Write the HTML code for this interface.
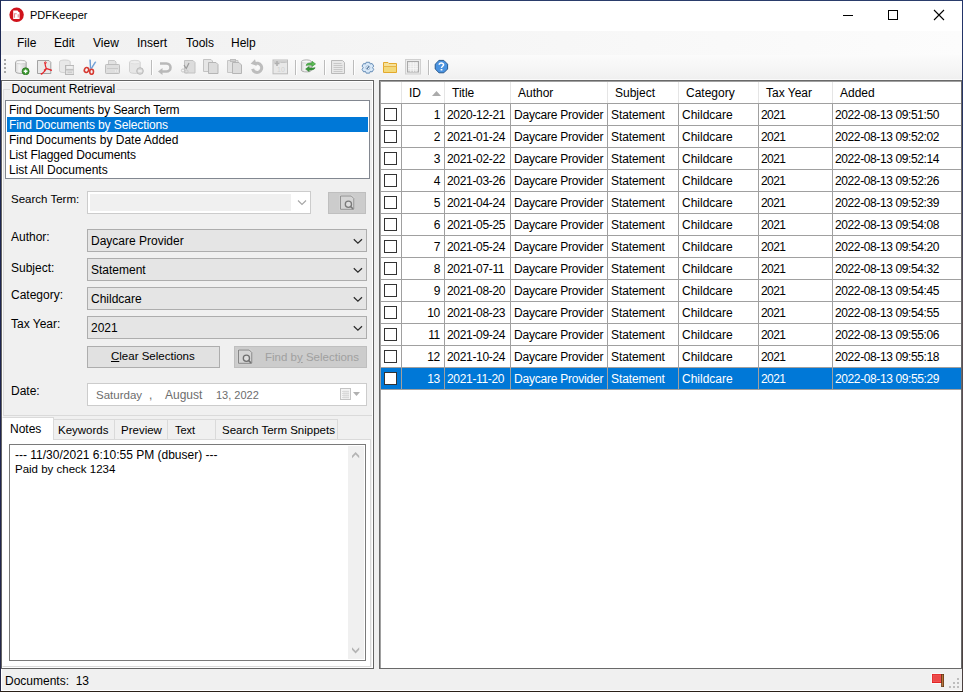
<!DOCTYPE html>
<html><head><meta charset="utf-8">
<style>
*{box-sizing:border-box;margin:0;padding:0}
body{width:963px;height:692px;position:relative;overflow:hidden;background:#f0f0f0;font-family:"Liberation Sans",sans-serif;font-size:12px;color:#000}
.a{position:absolute}
.t{position:absolute;white-space:nowrap;line-height:14px}
.s{font-size:11.5px}
.ic{position:absolute;width:16px;height:16px}
</style></head><body>
<div class="a" style="left:0px;top:0px;width:963px;height:31px;background:#fff"></div>
<svg class="a" style="left:9px;top:7px" width="16" height="16" viewBox="0 0 16 16">
<circle cx="7.6" cy="7.8" r="7.2" fill="#d0121b"/>
<path d="M4.2 3.6h4.6l1.8 1.8v6.6h-6.4z" fill="#fff"/>
<path d="M5.5 10.8V6.8h2.2M9.2 10.5V7.2" stroke="#e58a8e" stroke-width="1.1" fill="none"/>
<path d="M8.8 3.6L10.6 5.4" stroke="#d0121b" stroke-width="0.8"/>
</svg>
<div class="t" style="left:30px;top:8px;font-size:11px">PDFKeeper</div>
<div class="a" style="left:843px;top:15px;width:10px;height:1px;background:#000"></div>
<div class="a" style="left:888px;top:10px;width:10px;height:10px;border:1px solid #000"></div>
<svg class="a" style="left:933px;top:9px" width="12" height="12" viewBox="0 0 12 12"><path d="M1 1L11 11M11 1L1 11" stroke="#000" stroke-width="1.1"/></svg>
<div class="a" style="left:1px;top:31px;width:961px;height:24px;background:linear-gradient(to right,#f0f0f0,#fcfcfc)"></div>
<div class="t" style="left:17px;top:36px;">File</div>
<div class="t" style="left:54px;top:36px;">Edit</div>
<div class="t" style="left:93px;top:36px;">View</div>
<div class="t" style="left:137px;top:36px;">Insert</div>
<div class="t" style="left:186px;top:36px;">Tools</div>
<div class="t" style="left:231px;top:36px;">Help</div>
<div class="a" style="left:1px;top:55px;width:961px;height:25px;background:linear-gradient(#fbfbfb,#f5f5f5 60%,#efefef)"></div>
<div class="a" style="left:1px;top:79px;width:961px;height:1px;background:#fafafa"></div>
<!-- grip -->
<div class="a" style="left:4px;top:59px;width:2px;height:2px;background:#a7a7a7"></div>
<div class="a" style="left:4px;top:63px;width:2px;height:2px;background:#a7a7a7"></div>
<div class="a" style="left:4px;top:67px;width:2px;height:2px;background:#a7a7a7"></div>
<div class="a" style="left:4px;top:71px;width:2px;height:2px;background:#a7a7a7"></div>
<!-- separators -->
<div class="a" style="left:151px;top:60px;width:1px;height:15px;background:#bcbcbc;box-shadow:1px 0 0 #fff"></div>
<div class="a" style="left:295px;top:60px;width:1px;height:15px;background:#bcbcbc;box-shadow:1px 0 0 #fff"></div>
<div class="a" style="left:324px;top:60px;width:1px;height:15px;background:#bcbcbc;box-shadow:1px 0 0 #fff"></div>
<div class="a" style="left:353px;top:60px;width:1px;height:15px;background:#bcbcbc;box-shadow:1px 0 0 #fff"></div>
<div class="a" style="left:428px;top:60px;width:1px;height:15px;background:#bcbcbc;box-shadow:1px 0 0 #fff"></div>
<!-- 1 db add -->
<svg class="ic" style="left:14px;top:59px" viewBox="0 0 16 16">
<defs><linearGradient id="cyl" x1="0" x2="1"><stop offset="0" stop-color="#d8d8d8"/><stop offset="0.35" stop-color="#f4f4f4"/><stop offset="1" stop-color="#cfcfcf"/></linearGradient></defs>
<path d="M1.5 3.2C1.5 0.8 12.2 0.8 12.2 3.2V12.6C12.2 15 1.5 15 1.5 12.6Z" fill="url(#cyl)" stroke="#9f9f9f" stroke-width="0.9"/>
<ellipse cx="6.85" cy="3.2" rx="5" ry="1.7" fill="#f7f7f7" stroke="#bdbdbd" stroke-width="0.6"/>
<circle cx="11.6" cy="12.3" r="3.5" fill="#3c9a30" stroke="#2b7321" stroke-width="0.8"/>
<path d="M11.6 10.4v3.8M9.7 12.3h3.8" stroke="#fff" stroke-width="1.4"/>
</svg>
<!-- 2 pdf -->
<svg class="ic" style="left:36px;top:59px" viewBox="0 0 16 16">
<path d="M1.5 1.5H13L14.8 3.3V14.5H1.5Z" fill="#e9e9e9" stroke="#9a9a9a" stroke-width="0.9"/>
<path d="M9.3 3.6C8.6 5 9.6 7.6 10.3 9.4C10 10.8 7.5 13.5 5.6 15M10.3 9.4C11.5 10 13.8 10.6 15.3 11.2M10.3 9.4L8 11.5" fill="none" stroke="#e3262b" stroke-width="1.2"/>
<circle cx="9.4" cy="3.7" r="0.9" fill="none" stroke="#e3262b" stroke-width="0.9"/>
<circle cx="15.2" cy="11.2" r="0.8" fill="#e3262b"/><circle cx="5.5" cy="14.8" r="0.9" fill="#e3262b"/>
</svg>
<!-- 3 db save disabled -->
<svg class="ic" style="left:58px;top:59px" viewBox="0 0 16 16">
<path d="M1.5 2.8C1.5 0.4 12.2 0.4 12.2 2.8V12C12.2 14.2 1.5 14.2 1.5 12Z" fill="#e8e8e8" stroke="#cdcdcd" stroke-width="0.9"/>
<rect x="7.5" y="6.5" width="8.5" height="9" fill="#e2e2e2" stroke="#b9b9b9"/>
<rect x="9" y="7" width="5.5" height="2.5" fill="#efefef"/>
<path d="M8 10.8h7.5" stroke="#b9b9b9" stroke-width="1.2"/>
<path d="M9.5 13.2h4.5" stroke="#c4c4c4" stroke-width="1"/>
</svg>
<!-- 4 scissors -->
<svg class="ic" style="left:82px;top:59px" viewBox="0 0 16 16">
<path d="M8 0.5L8.6 10.3" stroke="#8fb7e3" stroke-width="1.5"/>
<path d="M13.8 2.6L9 10.2" stroke="#8fb7e3" stroke-width="1.5"/>
<path d="M8.2 1L8.6 9M13.2 3L9.6 9" stroke="#4a7fc0" stroke-width="0.5"/>
<ellipse cx="4.5" cy="11" rx="2.1" ry="2.5" fill="none" stroke="#d63a32" stroke-width="1.6" transform="rotate(25 4.5 11)"/>
<ellipse cx="9.6" cy="12.8" rx="1.9" ry="2.5" fill="none" stroke="#d63a32" stroke-width="1.6"/>
</svg>
<!-- 5 printer disabled -->
<svg class="ic" style="left:104px;top:59px" viewBox="0 0 16 16">
<path d="M4.5 1.5H10.5L12 3V6H4.5Z" fill="#e2e2e2" stroke="#c8c8c8"/>
<rect x="1.5" y="5.5" width="14" height="9" rx="0.8" fill="#dedede" stroke="#bdbdbd"/>
<path d="M3 9.5h11" stroke="#c9c9c9"/><path d="M11 12h1M13 12h1" stroke="#f6f6f6"/>
</svg>
<!-- 6 db minus disabled -->
<svg class="ic" style="left:128px;top:59px" viewBox="0 0 16 16">
<path d="M1.5 3.2C1.5 0.8 12.2 0.8 12.2 3.2V12.6C12.2 15 1.5 15 1.5 12.6Z" fill="#e6e6e6" stroke="#cdcdcd" stroke-width="0.9"/>
<ellipse cx="6.85" cy="3.2" rx="5" ry="1.7" fill="#eeeeee" stroke="#d6d6d6" stroke-width="0.6"/>
<circle cx="12" cy="12" r="3.3" fill="#d9d9d9" stroke="#b9b9b9"/>
<path d="M10.2 12h3.6" stroke="#f4f4f4" stroke-width="1.4"/>
</svg>
<!-- 7 undo -->
<svg class="ic" style="left:157px;top:59px" viewBox="0 0 16 16">
<path d="M3 4.5H9.5A4 4 0 0 1 9.5 12.5H5" fill="none" stroke="#b9b9b9" stroke-width="2.6"/>
<path d="M1 12.5L5.5 9V16Z" fill="#b9b9b9"/>
</svg>
<!-- 8 cut doc -->
<svg class="ic" style="left:180px;top:59px" viewBox="0 0 16 16">
<path d="M4.5 1.5H13L15 3.5V14H4.5Z" fill="#dcdcdc" stroke="#c2c2c2"/>
<path d="M9 4L6 10M4 6L6.5 10" stroke="#9a9a9a" stroke-width="1.2"/>
<circle cx="3" cy="11.5" r="1.6" fill="none" stroke="#c8c8c8"/><circle cx="6.5" cy="12.5" r="1.6" fill="none" stroke="#c8c8c8"/>
</svg>
<!-- 9 copy -->
<svg class="ic" style="left:203px;top:59px" viewBox="0 0 16 16">
<path d="M0.5 0.5H8L9.5 2V12.5H0.5Z" fill="#e6e6e6" stroke="#c3c3c3"/>
<path d="M5.5 3.5H13L15 5.5V14.5H5.5Z" fill="#dcdcdc" stroke="#b5b5b5"/>
</svg>
<!-- 10 paste -->
<svg class="ic" style="left:227px;top:59px" viewBox="0 0 16 16">
<path d="M0.5 1.5H11V13.5H0.5Z" fill="#e3e3e3" stroke="#c6c6c6"/>
<rect x="3.5" y="0.5" width="5" height="2" fill="#cfcfcf" stroke="#bdbdbd"/>
<path d="M5.5 3.5H12L14.5 6V14.5H5.5Z" fill="#dcdcdc" stroke="#b5b5b5"/>
</svg>
<!-- 11 rotate -->
<svg class="ic" style="left:250px;top:59px" viewBox="0 0 16 16">
<path d="M4.2 5.2A4.6 4.6 0 1 1 2.6 9.8" fill="none" stroke="#bdbdbd" stroke-width="3"/>
<path d="M5 0.3L0.6 4.8L6.8 6.8Z" fill="#bdbdbd"/>
<circle cx="7.6" cy="8.6" r="1.6" fill="#fafafa"/>
</svg>
<!-- 12 calendar -->
<svg class="ic" style="left:272px;top:59px" viewBox="0 0 16 16">
<rect x="1" y="1" width="14.5" height="13.8" fill="#e8e8e8" stroke="#bdbdbd"/>
<path d="M1.5 3h13.5" stroke="#cfcfcf" stroke-width="2"/>
<path d="M2.5 4.5h5M5 2v5" stroke="#b0b0b0" stroke-width="1.6"/>
<path d="M9 3.5h4.5" stroke="#c4c4c4" stroke-width="1"/>
<text x="9" y="12.6" font-size="7" text-anchor="middle" fill="#d2d2d2" font-family="Liberation Sans">10</text>
</svg>
<!-- 13 db refresh -->
<svg class="ic" style="left:300px;top:59px" viewBox="0 0 17 17">
<path d="M1.5 2.8C1.5 0.4 12 0.4 12 2.8V12C12 14.3 1.5 14.3 1.5 12Z" fill="url(#cyl)" stroke="#a5a5a5" stroke-width="0.9"/>
<ellipse cx="6.75" cy="2.8" rx="5" ry="1.6" fill="#f7f7f7" stroke="#bdbdbd" stroke-width="0.6"/>
<path d="M6.5 6.8C7 4.6 9 4.2 12.8 4.3V2.5L16.5 5.2L12.8 8V6.4C10 6.3 8.4 6.5 6.5 6.8Z" fill="#5cbc55" stroke="#2f8a2e" stroke-width="0.6"/>
<path d="M16 9.2C15.5 11.3 13.5 11.7 9.7 11.6V13.4L6 10.7L9.7 8V9.6C12.5 9.6 14 9.5 16 9.2Z" fill="#3a9a3a" stroke="#2a7a2a" stroke-width="0.6"/>
</svg>
<!-- 14 doc -->
<svg class="ic" style="left:330px;top:59px" viewBox="0 0 16 16">
<path d="M1.5 1.5H12.5L14.5 3.5V14.5H1.5Z" fill="#e8e8e8" stroke="#b9b9b9"/>
<path d="M3.5 4.5h8M3.5 6.5h9M3.5 8.5h9M3.5 10.5h9M3.5 12.5h9" stroke="#c4c4c4" stroke-width="0.9"/>
</svg>
<!-- 15 gear -->
<svg class="ic" style="left:360px;top:60px" viewBox="0 0 16 16">
<g transform="translate(1,1) scale(0.86)">
<path d="M6 1.5H10L10.8 3.5L12.9 2.9L14.8 5.9L13.4 7.8L14.8 9.7L12.9 12.7L10.8 12.1L10 14.1H6L5.2 12.1L3.1 12.7L1.2 9.7L2.6 7.8L1.2 5.9L3.1 2.9L5.2 3.5Z" fill="#d9e9f8" stroke="#5f87b3" stroke-width="1.1"/>
<circle cx="8" cy="7.8" r="2.3" fill="#f2f8fd" stroke="#86a5c6" stroke-width="0.8"/>
<path d="M9.2 6.3L6.8 9.3" stroke="#3f6590" stroke-width="1.2"/>
</g>
</svg>
<!-- 16 folder -->
<svg class="ic" style="left:382px;top:59px" viewBox="0 0 16 16">
<path d="M1.5 3.5H6L7 4.5H14.5V13.5H1.5Z" fill="#f6e19a" stroke="#e3a92c"/>
<path d="M1.5 7.5H14.5" stroke="#e7b447"/>
<rect x="2" y="8" width="12" height="5" fill="#f3d97a"/>
</svg>
<!-- 17 grid -->
<svg class="ic" style="left:405px;top:59px" viewBox="0 0 16 16">
<rect x="0.5" y="0.5" width="15" height="14.5" fill="#ececec" stroke="#d0d0d0"/>
<rect x="2.5" y="2.5" width="11" height="10.5" fill="#e4e4e4" stroke="#a9a9a9"/>
<path d="M3 5h10M3 7.3h10M3 9.6h10M5.8 3v10M8.4 3v10M11 3v10" stroke="#f7f7f7" stroke-width="0.8"/>
</svg>
<!-- 18 help -->
<svg class="ic" style="left:434px;top:59px" viewBox="0 0 16 16">
<path d="M5 1.4H9.8L13.6 5.2V10L9.8 13.8H5L1.2 10V5.2Z" fill="#4a93e0" stroke="#1d4f84" stroke-width="0.9"/>
<path d="M5.2 5.8C5.2 3.6 9.6 3.5 9.6 5.8C9.6 7.2 7.5 7.3 7.5 9" fill="none" stroke="#fff" stroke-width="1.5"/>
<rect x="6.6" y="10" width="1.8" height="1.5" fill="#fff"/>
</svg>

<div class="a" style="left:1px;top:80px;width:373px;height:589px;border:1px solid #646464;background:#f0f0f0"></div>
<div class="a" style="left:2px;top:81px;width:371px;height:1px;background:#fff"></div>
<div class="a" style="left:2px;top:81px;width:1px;height:586px;background:#fff"></div>
<div class="a" style="left:372px;top:81px;width:1px;height:586px;background:#fff"></div>
<div class="a" style="left:2px;top:667px;width:371px;height:1px;background:#fff"></div>
<div class="a" style="left:3px;top:89px;width:369px;height:1px;background:#dcdcdc"></div>
<div class="a" style="left:3px;top:89px;width:1px;height:327px;background:#dcdcdc"></div>
<div class="t" style="left:9.5px;top:82px;background:#f0f0f0;padding:0 2px;letter-spacing:-0.1px">Document Retrieval</div>
<div class="a" style="left:5px;top:100px;width:365px;height:79px;border:1px solid #828790;background:#fff"></div>
<div class="a" style="left:7px;top:117px;width:361px;height:15px;background:#0078d7"></div>
<div class="t" style="left:9px;top:103px;letter-spacing:-0.14px">Find Documents by Search Term</div>
<div class="t" style="left:9px;top:118px;color:#fff;letter-spacing:-0.11px">Find Documents by Selections</div>
<div class="t" style="left:9px;top:133px;">Find Documents by Date Added</div>
<div class="t" style="left:9px;top:148px;letter-spacing:-0.11px">List Flagged Documents</div>
<div class="t" style="left:9px;top:163px;">List All Documents</div>
<div class="t" style="left:11px;top:192px;font-size:11.5px">Search Term:</div>
<div class="a" style="left:87px;top:191px;width:224px;height:23px;border:1px solid #cccccc;background:#fff"></div>
<div class="a" style="left:90px;top:194px;width:201px;height:17px;background:#f0f0f0"></div>
<svg class="a" style="left:297px;top:199px" width="10" height="7" viewBox="0 0 10 7"><path d="M1 1.5L5 5.5L9 1.5" stroke="#a6a6a6" stroke-width="1.1" fill="none"/></svg>
<div class="a" style="left:328px;top:192px;width:38px;height:22px;border:1px solid #bfbfbf;background:#cccccc"></div>
<svg class="a" style="left:339px;top:194px" width="17" height="17" viewBox="0 0 17 17">
<path d="M0.5 1H13L15.5 3.5V16.2H0.5Z" fill="#e2e2e2" opacity="0.6"/>
<path d="M1.5 2H12.3L14.8 4.5V15.3H1.5Z" fill="#d5d5d5" stroke="#8a8a8a" stroke-width="0.9"/>
<circle cx="9.4" cy="10.3" r="3.1" fill="#dedede" stroke="#7a7a7a" stroke-width="1.3"/>
<path d="M11.6 12.5L14 14.9" stroke="#7a7a7a" stroke-width="1.5"/>
</svg>
<div class="t" style="left:11px;top:230px;">Author:</div>
<div class="a" style="left:87px;top:229px;width:280px;height:23px;border:1px solid #adadad;background:#e5e5e5"></div>
<div class="t" style="left:91px;top:234px;">Daycare Provider</div>
<svg class="a" style="left:353px;top:238px" width="10" height="7" viewBox="0 0 10 7"><path d="M0.8 1.3L4.9 5.1L9 1.3" stroke="#2a2a2a" stroke-width="1.25" fill="none"/></svg>
<div class="t" style="left:11px;top:261px;">Subject:</div>
<div class="a" style="left:87px;top:258px;width:280px;height:23px;border:1px solid #adadad;background:#e5e5e5"></div>
<div class="t" style="left:91px;top:263px;">Statement</div>
<svg class="a" style="left:353px;top:267px" width="10" height="7" viewBox="0 0 10 7"><path d="M0.8 1.3L4.9 5.1L9 1.3" stroke="#2a2a2a" stroke-width="1.25" fill="none"/></svg>
<div class="t" style="left:11px;top:288px;">Category:</div>
<div class="a" style="left:87px;top:287px;width:280px;height:23px;border:1px solid #adadad;background:#e5e5e5"></div>
<div class="t" style="left:91px;top:292px;">Childcare</div>
<svg class="a" style="left:353px;top:296px" width="10" height="7" viewBox="0 0 10 7"><path d="M0.8 1.3L4.9 5.1L9 1.3" stroke="#2a2a2a" stroke-width="1.25" fill="none"/></svg>
<div class="t" style="left:11px;top:317px;">Tax Year:</div>
<div class="a" style="left:87px;top:316px;width:280px;height:23px;border:1px solid #adadad;background:#e5e5e5"></div>
<div class="t" style="left:91px;top:321px;">2021</div>
<svg class="a" style="left:353px;top:325px" width="10" height="7" viewBox="0 0 10 7"><path d="M0.8 1.3L4.9 5.1L9 1.3" stroke="#2a2a2a" stroke-width="1.25" fill="none"/></svg>
<div class="a" style="left:87px;top:346px;width:133px;height:22px;border:1px solid #adadad;background:#e1e1e1"></div>
<div class="t" style="left:111px;top:349px;font-size:11.5px"><u>C</u>lear Selections</div>
<div class="a" style="left:234px;top:346px;width:133px;height:22px;border:1px solid #bfbfbf;background:#cccccc"></div>
<svg class="a" style="left:237px;top:348px" width="17" height="17" viewBox="0 0 17 17">
<path d="M0.5 1H13L15.5 3.5V16.2H0.5Z" fill="#e2e2e2" opacity="0.6"/>
<path d="M1.5 2H12.3L14.8 4.5V15.3H1.5Z" fill="#d5d5d5" stroke="#7d7d7d" stroke-width="0.9"/>
<circle cx="9.4" cy="10.3" r="3.1" fill="#dedede" stroke="#707070" stroke-width="1.3"/>
<path d="M11.6 12.5L14 14.9" stroke="#707070" stroke-width="1.5"/>
</svg>
<div class="t" style="left:265px;top:350px;font-size:11.5px;color:#a0a0a0">Find b<u>y</u> Selections</div>
<div class="t" style="left:11px;top:384px;">Date:</div>
<div class="a" style="left:87px;top:383px;width:280px;height:23px;border:1px solid #cccccc;background:#fff"></div>
<div class="t" style="left:96px;top:388px;font-size:11.5px;color:#6d6d6d">Saturday</div>
<div class="t" style="left:149px;top:388px;font-size:12px;color:#6d6d6d">,</div>
<div class="t" style="left:165px;top:388px;font-size:12px;color:#6d6d6d">August</div>
<div class="t" style="left:216px;top:388px;font-size:11px;color:#6d6d6d">13, 2022</div>
<svg class="a" style="left:339px;top:387px" width="24" height="14" viewBox="0 0 24 14">
<rect x="1.5" y="1.5" width="10" height="11" fill="#f4f4f4" stroke="#c4c4c4"/>
<path d="M3 4.5h7M3 6.5h7M3 8.5h7M3 10.5h7M5 3.5v8M7 3.5v8M9 3.5v8" stroke="#d6d6d6" stroke-width="0.8"/>
<path d="M14 5h7l-3.5 4z" fill="#b0b0b0"/>
</svg>
<div class="a" style="left:3px;top:415px;width:369px;height:1px;background:#dadada"></div>
<div class="a" style="left:2px;top:439px;width:369px;height:228px;border:1px solid #dadada;border-left-color:#fff;background:#fff"></div>
<div class="a" style="left:53px;top:419px;width:62px;height:21px;border:1px solid #dadada;border-left:none;background:#f0f0f0"></div>
<div class="a" style="left:114px;top:419px;width:54px;height:21px;border:1px solid #dadada;background:#f0f0f0"></div>
<div class="a" style="left:167px;top:419px;width:49px;height:21px;border:1px solid #dadada;background:#f0f0f0"></div>
<div class="a" style="left:215px;top:419px;width:123px;height:21px;border:1px solid #dadada;background:#f0f0f0"></div>
<div class="a" style="left:2px;top:417px;width:52px;height:23px;border:1px solid #dadada;border-bottom:none;border-left-color:#fff;background:#fff"></div>
<div class="t" style="left:10px;top:422px;">Notes</div>
<div class="t" style="left:58px;top:423px;font-size:11.5px">Keywords</div>
<div class="t" style="left:121px;top:423px;font-size:11.5px">Preview</div>
<div class="t" style="left:175px;top:423px;font-size:11px">Text</div>
<div class="t" style="left:222px;top:423px;font-size:11.5px">Search Term Snippets</div>
<div class="a" style="left:9px;top:444px;width:357px;height:217px;border:1px solid #7a7a7a;background:#fff"></div>
<div class="a" style="left:348px;top:446px;width:16px;height:213px;background:#f0f0f0"></div>
<svg class="a" style="left:350px;top:450px" width="12" height="9" viewBox="0 0 12 9"><path d="M2 8.2V5.8L5.6 2L9.2 5.8V8.2L5.6 4.6Z" fill="#b4b4b4"/></svg>
<svg class="a" style="left:350px;top:645px" width="12" height="10" viewBox="0 0 12 10"><path d="M2 2.3V4.7L5.6 8.5L9.2 4.7V2.3L5.6 5.9Z" fill="#b4b4b4"/></svg>
<div class="t" style="left:15px;top:448px;">--- 11/30/2021 6:10:55 PM (dbuser) ---</div>
<div class="t" style="left:15px;top:462px;font-size:11.5px">Paid by check 1234</div>
<div class="a" style="left:379px;top:80px;width:583px;height:589px;border:1px solid #696969;background:#fff"></div>
<div class="a" style="left:380px;top:81px;width:1px;height:587px;background:#a0a0a0"></div>
<div class="a" style="left:380px;top:81px;width:581px;height:1px;background:#a0a0a0"></div>
<div class="a" style="left:381px;top:82px;width:580px;height:21px;background:#fff"></div>
<div class="a" style="left:401px;top:82px;width:1px;height:21px;background:#e5e5e5"></div>
<div class="a" style="left:444px;top:82px;width:1px;height:21px;background:#e5e5e5"></div>
<div class="a" style="left:510px;top:82px;width:1px;height:21px;background:#e5e5e5"></div>
<div class="a" style="left:607px;top:82px;width:1px;height:21px;background:#e5e5e5"></div>
<div class="a" style="left:678px;top:82px;width:1px;height:21px;background:#e5e5e5"></div>
<div class="a" style="left:758px;top:82px;width:1px;height:21px;background:#e5e5e5"></div>
<div class="a" style="left:832px;top:82px;width:1px;height:21px;background:#e5e5e5"></div>
<div class="a" style="left:381px;top:103px;width:580px;height:1px;background:#a0a0a0"></div>
<div class="t" style="left:409px;top:86px;">ID</div>
<div class="t" style="left:452px;top:86px;">Title</div>
<div class="t" style="left:518px;top:86px;">Author</div>
<div class="t" style="left:615px;top:86px;">Subject</div>
<div class="t" style="left:686px;top:86px;">Category</div>
<div class="t" style="left:766px;top:86px;">Tax Year</div>
<div class="t" style="left:840px;top:86px;">Added</div>
<svg class="a" style="left:431px;top:90px" width="11" height="7" viewBox="0 0 11 7"><path d="M1 6L5.5 1L10 6Z" fill="#ababab"/></svg>
<div class="a" style="left:381px;top:125px;width:580px;height:1px;background:#a0a0a0"></div>
<div class="a" style="left:401px;top:104px;width:1px;height:21px;background:#a0a0a0"></div>
<div class="a" style="left:444px;top:104px;width:1px;height:21px;background:#a0a0a0"></div>
<div class="a" style="left:510px;top:104px;width:1px;height:21px;background:#a0a0a0"></div>
<div class="a" style="left:607px;top:104px;width:1px;height:21px;background:#a0a0a0"></div>
<div class="a" style="left:678px;top:104px;width:1px;height:21px;background:#a0a0a0"></div>
<div class="a" style="left:758px;top:104px;width:1px;height:21px;background:#a0a0a0"></div>
<div class="a" style="left:832px;top:104px;width:1px;height:21px;background:#a0a0a0"></div>
<div class="a" style="left:384px;top:108px;width:13px;height:13px;border:1px solid #333;background:#fff"></div>
<div class="t" style="left:402px;top:108px;color:#000;width:38px;text-align:right;letter-spacing:-0.3px">1</div>
<div class="t" style="left:447px;top:108px;color:#000;letter-spacing:-0.33px">2020-12-21</div>
<div class="t" style="left:514px;top:108px;color:#000;letter-spacing:-0.22px">Daycare Provider</div>
<div class="t" style="left:611px;top:108px;color:#000;letter-spacing:-0.1px">Statement</div>
<div class="t" style="left:682px;top:108px;color:#000">Childcare</div>
<div class="t" style="left:761px;top:108px;color:#000;letter-spacing:-0.6px">2021</div>
<div class="t" style="left:835px;top:108px;color:#000;letter-spacing:-0.39px">2022-08-13 09:51:50</div>
<div class="a" style="left:381px;top:147px;width:580px;height:1px;background:#a0a0a0"></div>
<div class="a" style="left:401px;top:126px;width:1px;height:21px;background:#a0a0a0"></div>
<div class="a" style="left:444px;top:126px;width:1px;height:21px;background:#a0a0a0"></div>
<div class="a" style="left:510px;top:126px;width:1px;height:21px;background:#a0a0a0"></div>
<div class="a" style="left:607px;top:126px;width:1px;height:21px;background:#a0a0a0"></div>
<div class="a" style="left:678px;top:126px;width:1px;height:21px;background:#a0a0a0"></div>
<div class="a" style="left:758px;top:126px;width:1px;height:21px;background:#a0a0a0"></div>
<div class="a" style="left:832px;top:126px;width:1px;height:21px;background:#a0a0a0"></div>
<div class="a" style="left:384px;top:130px;width:13px;height:13px;border:1px solid #333;background:#fff"></div>
<div class="t" style="left:402px;top:130px;color:#000;width:38px;text-align:right;letter-spacing:-0.3px">2</div>
<div class="t" style="left:447px;top:130px;color:#000;letter-spacing:-0.33px">2021-01-24</div>
<div class="t" style="left:514px;top:130px;color:#000;letter-spacing:-0.22px">Daycare Provider</div>
<div class="t" style="left:611px;top:130px;color:#000;letter-spacing:-0.1px">Statement</div>
<div class="t" style="left:682px;top:130px;color:#000">Childcare</div>
<div class="t" style="left:761px;top:130px;color:#000;letter-spacing:-0.6px">2021</div>
<div class="t" style="left:835px;top:130px;color:#000;letter-spacing:-0.39px">2022-08-13 09:52:02</div>
<div class="a" style="left:381px;top:169px;width:580px;height:1px;background:#a0a0a0"></div>
<div class="a" style="left:401px;top:148px;width:1px;height:21px;background:#a0a0a0"></div>
<div class="a" style="left:444px;top:148px;width:1px;height:21px;background:#a0a0a0"></div>
<div class="a" style="left:510px;top:148px;width:1px;height:21px;background:#a0a0a0"></div>
<div class="a" style="left:607px;top:148px;width:1px;height:21px;background:#a0a0a0"></div>
<div class="a" style="left:678px;top:148px;width:1px;height:21px;background:#a0a0a0"></div>
<div class="a" style="left:758px;top:148px;width:1px;height:21px;background:#a0a0a0"></div>
<div class="a" style="left:832px;top:148px;width:1px;height:21px;background:#a0a0a0"></div>
<div class="a" style="left:384px;top:152px;width:13px;height:13px;border:1px solid #333;background:#fff"></div>
<div class="t" style="left:402px;top:152px;color:#000;width:38px;text-align:right;letter-spacing:-0.3px">3</div>
<div class="t" style="left:447px;top:152px;color:#000;letter-spacing:-0.33px">2021-02-22</div>
<div class="t" style="left:514px;top:152px;color:#000;letter-spacing:-0.22px">Daycare Provider</div>
<div class="t" style="left:611px;top:152px;color:#000;letter-spacing:-0.1px">Statement</div>
<div class="t" style="left:682px;top:152px;color:#000">Childcare</div>
<div class="t" style="left:761px;top:152px;color:#000;letter-spacing:-0.6px">2021</div>
<div class="t" style="left:835px;top:152px;color:#000;letter-spacing:-0.39px">2022-08-13 09:52:14</div>
<div class="a" style="left:381px;top:191px;width:580px;height:1px;background:#a0a0a0"></div>
<div class="a" style="left:401px;top:170px;width:1px;height:21px;background:#a0a0a0"></div>
<div class="a" style="left:444px;top:170px;width:1px;height:21px;background:#a0a0a0"></div>
<div class="a" style="left:510px;top:170px;width:1px;height:21px;background:#a0a0a0"></div>
<div class="a" style="left:607px;top:170px;width:1px;height:21px;background:#a0a0a0"></div>
<div class="a" style="left:678px;top:170px;width:1px;height:21px;background:#a0a0a0"></div>
<div class="a" style="left:758px;top:170px;width:1px;height:21px;background:#a0a0a0"></div>
<div class="a" style="left:832px;top:170px;width:1px;height:21px;background:#a0a0a0"></div>
<div class="a" style="left:384px;top:174px;width:13px;height:13px;border:1px solid #333;background:#fff"></div>
<div class="t" style="left:402px;top:174px;color:#000;width:38px;text-align:right;letter-spacing:-0.3px">4</div>
<div class="t" style="left:447px;top:174px;color:#000;letter-spacing:-0.33px">2021-03-26</div>
<div class="t" style="left:514px;top:174px;color:#000;letter-spacing:-0.22px">Daycare Provider</div>
<div class="t" style="left:611px;top:174px;color:#000;letter-spacing:-0.1px">Statement</div>
<div class="t" style="left:682px;top:174px;color:#000">Childcare</div>
<div class="t" style="left:761px;top:174px;color:#000;letter-spacing:-0.6px">2021</div>
<div class="t" style="left:835px;top:174px;color:#000;letter-spacing:-0.39px">2022-08-13 09:52:26</div>
<div class="a" style="left:381px;top:213px;width:580px;height:1px;background:#a0a0a0"></div>
<div class="a" style="left:401px;top:192px;width:1px;height:21px;background:#a0a0a0"></div>
<div class="a" style="left:444px;top:192px;width:1px;height:21px;background:#a0a0a0"></div>
<div class="a" style="left:510px;top:192px;width:1px;height:21px;background:#a0a0a0"></div>
<div class="a" style="left:607px;top:192px;width:1px;height:21px;background:#a0a0a0"></div>
<div class="a" style="left:678px;top:192px;width:1px;height:21px;background:#a0a0a0"></div>
<div class="a" style="left:758px;top:192px;width:1px;height:21px;background:#a0a0a0"></div>
<div class="a" style="left:832px;top:192px;width:1px;height:21px;background:#a0a0a0"></div>
<div class="a" style="left:384px;top:196px;width:13px;height:13px;border:1px solid #333;background:#fff"></div>
<div class="t" style="left:402px;top:196px;color:#000;width:38px;text-align:right;letter-spacing:-0.3px">5</div>
<div class="t" style="left:447px;top:196px;color:#000;letter-spacing:-0.33px">2021-04-24</div>
<div class="t" style="left:514px;top:196px;color:#000;letter-spacing:-0.22px">Daycare Provider</div>
<div class="t" style="left:611px;top:196px;color:#000;letter-spacing:-0.1px">Statement</div>
<div class="t" style="left:682px;top:196px;color:#000">Childcare</div>
<div class="t" style="left:761px;top:196px;color:#000;letter-spacing:-0.6px">2021</div>
<div class="t" style="left:835px;top:196px;color:#000;letter-spacing:-0.39px">2022-08-13 09:52:39</div>
<div class="a" style="left:381px;top:235px;width:580px;height:1px;background:#a0a0a0"></div>
<div class="a" style="left:401px;top:214px;width:1px;height:21px;background:#a0a0a0"></div>
<div class="a" style="left:444px;top:214px;width:1px;height:21px;background:#a0a0a0"></div>
<div class="a" style="left:510px;top:214px;width:1px;height:21px;background:#a0a0a0"></div>
<div class="a" style="left:607px;top:214px;width:1px;height:21px;background:#a0a0a0"></div>
<div class="a" style="left:678px;top:214px;width:1px;height:21px;background:#a0a0a0"></div>
<div class="a" style="left:758px;top:214px;width:1px;height:21px;background:#a0a0a0"></div>
<div class="a" style="left:832px;top:214px;width:1px;height:21px;background:#a0a0a0"></div>
<div class="a" style="left:384px;top:218px;width:13px;height:13px;border:1px solid #333;background:#fff"></div>
<div class="t" style="left:402px;top:218px;color:#000;width:38px;text-align:right;letter-spacing:-0.3px">6</div>
<div class="t" style="left:447px;top:218px;color:#000;letter-spacing:-0.33px">2021-05-25</div>
<div class="t" style="left:514px;top:218px;color:#000;letter-spacing:-0.22px">Daycare Provider</div>
<div class="t" style="left:611px;top:218px;color:#000;letter-spacing:-0.1px">Statement</div>
<div class="t" style="left:682px;top:218px;color:#000">Childcare</div>
<div class="t" style="left:761px;top:218px;color:#000;letter-spacing:-0.6px">2021</div>
<div class="t" style="left:835px;top:218px;color:#000;letter-spacing:-0.39px">2022-08-13 09:54:08</div>
<div class="a" style="left:381px;top:257px;width:580px;height:1px;background:#a0a0a0"></div>
<div class="a" style="left:401px;top:236px;width:1px;height:21px;background:#a0a0a0"></div>
<div class="a" style="left:444px;top:236px;width:1px;height:21px;background:#a0a0a0"></div>
<div class="a" style="left:510px;top:236px;width:1px;height:21px;background:#a0a0a0"></div>
<div class="a" style="left:607px;top:236px;width:1px;height:21px;background:#a0a0a0"></div>
<div class="a" style="left:678px;top:236px;width:1px;height:21px;background:#a0a0a0"></div>
<div class="a" style="left:758px;top:236px;width:1px;height:21px;background:#a0a0a0"></div>
<div class="a" style="left:832px;top:236px;width:1px;height:21px;background:#a0a0a0"></div>
<div class="a" style="left:384px;top:240px;width:13px;height:13px;border:1px solid #333;background:#fff"></div>
<div class="t" style="left:402px;top:240px;color:#000;width:38px;text-align:right;letter-spacing:-0.3px">7</div>
<div class="t" style="left:447px;top:240px;color:#000;letter-spacing:-0.33px">2021-05-24</div>
<div class="t" style="left:514px;top:240px;color:#000;letter-spacing:-0.22px">Daycare Provider</div>
<div class="t" style="left:611px;top:240px;color:#000;letter-spacing:-0.1px">Statement</div>
<div class="t" style="left:682px;top:240px;color:#000">Childcare</div>
<div class="t" style="left:761px;top:240px;color:#000;letter-spacing:-0.6px">2021</div>
<div class="t" style="left:835px;top:240px;color:#000;letter-spacing:-0.39px">2022-08-13 09:54:20</div>
<div class="a" style="left:381px;top:279px;width:580px;height:1px;background:#a0a0a0"></div>
<div class="a" style="left:401px;top:258px;width:1px;height:21px;background:#a0a0a0"></div>
<div class="a" style="left:444px;top:258px;width:1px;height:21px;background:#a0a0a0"></div>
<div class="a" style="left:510px;top:258px;width:1px;height:21px;background:#a0a0a0"></div>
<div class="a" style="left:607px;top:258px;width:1px;height:21px;background:#a0a0a0"></div>
<div class="a" style="left:678px;top:258px;width:1px;height:21px;background:#a0a0a0"></div>
<div class="a" style="left:758px;top:258px;width:1px;height:21px;background:#a0a0a0"></div>
<div class="a" style="left:832px;top:258px;width:1px;height:21px;background:#a0a0a0"></div>
<div class="a" style="left:384px;top:262px;width:13px;height:13px;border:1px solid #333;background:#fff"></div>
<div class="t" style="left:402px;top:262px;color:#000;width:38px;text-align:right;letter-spacing:-0.3px">8</div>
<div class="t" style="left:447px;top:262px;color:#000;letter-spacing:-0.33px">2021-07-11</div>
<div class="t" style="left:514px;top:262px;color:#000;letter-spacing:-0.22px">Daycare Provider</div>
<div class="t" style="left:611px;top:262px;color:#000;letter-spacing:-0.1px">Statement</div>
<div class="t" style="left:682px;top:262px;color:#000">Childcare</div>
<div class="t" style="left:761px;top:262px;color:#000;letter-spacing:-0.6px">2021</div>
<div class="t" style="left:835px;top:262px;color:#000;letter-spacing:-0.39px">2022-08-13 09:54:32</div>
<div class="a" style="left:381px;top:301px;width:580px;height:1px;background:#a0a0a0"></div>
<div class="a" style="left:401px;top:280px;width:1px;height:21px;background:#a0a0a0"></div>
<div class="a" style="left:444px;top:280px;width:1px;height:21px;background:#a0a0a0"></div>
<div class="a" style="left:510px;top:280px;width:1px;height:21px;background:#a0a0a0"></div>
<div class="a" style="left:607px;top:280px;width:1px;height:21px;background:#a0a0a0"></div>
<div class="a" style="left:678px;top:280px;width:1px;height:21px;background:#a0a0a0"></div>
<div class="a" style="left:758px;top:280px;width:1px;height:21px;background:#a0a0a0"></div>
<div class="a" style="left:832px;top:280px;width:1px;height:21px;background:#a0a0a0"></div>
<div class="a" style="left:384px;top:284px;width:13px;height:13px;border:1px solid #333;background:#fff"></div>
<div class="t" style="left:402px;top:284px;color:#000;width:38px;text-align:right;letter-spacing:-0.3px">9</div>
<div class="t" style="left:447px;top:284px;color:#000;letter-spacing:-0.33px">2021-08-20</div>
<div class="t" style="left:514px;top:284px;color:#000;letter-spacing:-0.22px">Daycare Provider</div>
<div class="t" style="left:611px;top:284px;color:#000;letter-spacing:-0.1px">Statement</div>
<div class="t" style="left:682px;top:284px;color:#000">Childcare</div>
<div class="t" style="left:761px;top:284px;color:#000;letter-spacing:-0.6px">2021</div>
<div class="t" style="left:835px;top:284px;color:#000;letter-spacing:-0.39px">2022-08-13 09:54:45</div>
<div class="a" style="left:381px;top:323px;width:580px;height:1px;background:#a0a0a0"></div>
<div class="a" style="left:401px;top:302px;width:1px;height:21px;background:#a0a0a0"></div>
<div class="a" style="left:444px;top:302px;width:1px;height:21px;background:#a0a0a0"></div>
<div class="a" style="left:510px;top:302px;width:1px;height:21px;background:#a0a0a0"></div>
<div class="a" style="left:607px;top:302px;width:1px;height:21px;background:#a0a0a0"></div>
<div class="a" style="left:678px;top:302px;width:1px;height:21px;background:#a0a0a0"></div>
<div class="a" style="left:758px;top:302px;width:1px;height:21px;background:#a0a0a0"></div>
<div class="a" style="left:832px;top:302px;width:1px;height:21px;background:#a0a0a0"></div>
<div class="a" style="left:384px;top:306px;width:13px;height:13px;border:1px solid #333;background:#fff"></div>
<div class="t" style="left:402px;top:306px;color:#000;width:38px;text-align:right;letter-spacing:-0.3px">10</div>
<div class="t" style="left:447px;top:306px;color:#000;letter-spacing:-0.33px">2021-08-23</div>
<div class="t" style="left:514px;top:306px;color:#000;letter-spacing:-0.22px">Daycare Provider</div>
<div class="t" style="left:611px;top:306px;color:#000;letter-spacing:-0.1px">Statement</div>
<div class="t" style="left:682px;top:306px;color:#000">Childcare</div>
<div class="t" style="left:761px;top:306px;color:#000;letter-spacing:-0.6px">2021</div>
<div class="t" style="left:835px;top:306px;color:#000;letter-spacing:-0.39px">2022-08-13 09:54:55</div>
<div class="a" style="left:381px;top:345px;width:580px;height:1px;background:#a0a0a0"></div>
<div class="a" style="left:401px;top:324px;width:1px;height:21px;background:#a0a0a0"></div>
<div class="a" style="left:444px;top:324px;width:1px;height:21px;background:#a0a0a0"></div>
<div class="a" style="left:510px;top:324px;width:1px;height:21px;background:#a0a0a0"></div>
<div class="a" style="left:607px;top:324px;width:1px;height:21px;background:#a0a0a0"></div>
<div class="a" style="left:678px;top:324px;width:1px;height:21px;background:#a0a0a0"></div>
<div class="a" style="left:758px;top:324px;width:1px;height:21px;background:#a0a0a0"></div>
<div class="a" style="left:832px;top:324px;width:1px;height:21px;background:#a0a0a0"></div>
<div class="a" style="left:384px;top:328px;width:13px;height:13px;border:1px solid #333;background:#fff"></div>
<div class="t" style="left:402px;top:328px;color:#000;width:38px;text-align:right;letter-spacing:-0.3px">11</div>
<div class="t" style="left:447px;top:328px;color:#000;letter-spacing:-0.33px">2021-09-24</div>
<div class="t" style="left:514px;top:328px;color:#000;letter-spacing:-0.22px">Daycare Provider</div>
<div class="t" style="left:611px;top:328px;color:#000;letter-spacing:-0.1px">Statement</div>
<div class="t" style="left:682px;top:328px;color:#000">Childcare</div>
<div class="t" style="left:761px;top:328px;color:#000;letter-spacing:-0.6px">2021</div>
<div class="t" style="left:835px;top:328px;color:#000;letter-spacing:-0.39px">2022-08-13 09:55:06</div>
<div class="a" style="left:381px;top:367px;width:580px;height:1px;background:#a0a0a0"></div>
<div class="a" style="left:401px;top:346px;width:1px;height:21px;background:#a0a0a0"></div>
<div class="a" style="left:444px;top:346px;width:1px;height:21px;background:#a0a0a0"></div>
<div class="a" style="left:510px;top:346px;width:1px;height:21px;background:#a0a0a0"></div>
<div class="a" style="left:607px;top:346px;width:1px;height:21px;background:#a0a0a0"></div>
<div class="a" style="left:678px;top:346px;width:1px;height:21px;background:#a0a0a0"></div>
<div class="a" style="left:758px;top:346px;width:1px;height:21px;background:#a0a0a0"></div>
<div class="a" style="left:832px;top:346px;width:1px;height:21px;background:#a0a0a0"></div>
<div class="a" style="left:384px;top:350px;width:13px;height:13px;border:1px solid #333;background:#fff"></div>
<div class="t" style="left:402px;top:350px;color:#000;width:38px;text-align:right;letter-spacing:-0.3px">12</div>
<div class="t" style="left:447px;top:350px;color:#000;letter-spacing:-0.33px">2021-10-24</div>
<div class="t" style="left:514px;top:350px;color:#000;letter-spacing:-0.22px">Daycare Provider</div>
<div class="t" style="left:611px;top:350px;color:#000;letter-spacing:-0.1px">Statement</div>
<div class="t" style="left:682px;top:350px;color:#000">Childcare</div>
<div class="t" style="left:761px;top:350px;color:#000;letter-spacing:-0.6px">2021</div>
<div class="t" style="left:835px;top:350px;color:#000;letter-spacing:-0.39px">2022-08-13 09:55:18</div>
<div class="a" style="left:381px;top:368px;width:580px;height:21px;background:#0078d7"></div>
<div class="a" style="left:381px;top:389px;width:580px;height:1px;background:#a0a0a0"></div>
<div class="a" style="left:401px;top:368px;width:1px;height:21px;background:#a0a0a0"></div>
<div class="a" style="left:444px;top:368px;width:1px;height:21px;background:#a0a0a0"></div>
<div class="a" style="left:510px;top:368px;width:1px;height:21px;background:#a0a0a0"></div>
<div class="a" style="left:607px;top:368px;width:1px;height:21px;background:#a0a0a0"></div>
<div class="a" style="left:678px;top:368px;width:1px;height:21px;background:#a0a0a0"></div>
<div class="a" style="left:758px;top:368px;width:1px;height:21px;background:#a0a0a0"></div>
<div class="a" style="left:832px;top:368px;width:1px;height:21px;background:#a0a0a0"></div>
<div class="a" style="left:384px;top:372px;width:13px;height:13px;border:1px solid #333;background:#fff"></div>
<div class="t" style="left:402px;top:372px;color:#fff;width:38px;text-align:right;letter-spacing:-0.3px">13</div>
<div class="t" style="left:447px;top:372px;color:#fff;letter-spacing:-0.33px">2021-11-20</div>
<div class="t" style="left:514px;top:372px;color:#fff;letter-spacing:-0.22px">Daycare Provider</div>
<div class="t" style="left:611px;top:372px;color:#fff;letter-spacing:-0.1px">Statement</div>
<div class="t" style="left:682px;top:372px;color:#fff">Childcare</div>
<div class="t" style="left:761px;top:372px;color:#fff;letter-spacing:-0.6px">2021</div>
<div class="t" style="left:835px;top:372px;color:#fff;letter-spacing:-0.39px">2022-08-13 09:55:29</div>
<div class="a" style="left:1px;top:669px;width:961px;height:22px;background:#f0f0f0"></div>
<div class="a" style="left:1px;top:669px;width:1px;height:22px;background:#fff"></div>
<div class="a" style="left:1px;top:690px;width:961px;height:1px;background:#fff"></div>
<div class="t" style="left:5px;top:674px;">Documents:&nbsp;&nbsp;13</div>
<svg class="a" style="left:931px;top:673px" width="15" height="15" viewBox="0 0 15 15">
<rect x="0.3" y="0.3" width="12.4" height="10.6" fill="#fff" opacity="0.8"/>
<rect x="1" y="1" width="10" height="9" fill="#e01818"/>
<rect x="1.6" y="1.6" width="8.8" height="7.6" fill="#f05a5a"/>
<rect x="2.4" y="2.4" width="7.2" height="6" fill="#ec4848"/>
<rect x="10.2" y="1" width="2.8" height="13" fill="#4a2a10"/>
<rect x="10.8" y="1.5" width="1.6" height="12" fill="#b8743a"/>
</svg>
<div class="a" style="left:957px;top:678px;width:2px;height:2px;background:#bdbdbd"></div>
<div class="a" style="left:953px;top:682px;width:2px;height:2px;background:#bdbdbd"></div>
<div class="a" style="left:957px;top:682px;width:2px;height:2px;background:#bdbdbd"></div>
<div class="a" style="left:949px;top:686px;width:2px;height:2px;background:#bdbdbd"></div>
<div class="a" style="left:953px;top:686px;width:2px;height:2px;background:#bdbdbd"></div>
<div class="a" style="left:957px;top:686px;width:2px;height:2px;background:#bdbdbd"></div>
<div class="a" style="left:0px;top:0px;width:963px;height:1px;background:#2a3c6b"></div>
<div class="a" style="left:0px;top:0px;width:1px;height:692px;background:linear-gradient(#1e2a55,#1e2450 60%,#252848)"></div>
<div class="a" style="left:962px;top:0px;width:1px;height:692px;background:linear-gradient(#22346a,#2a3560 20%,#5e5258 45%,#4a4040)"></div>
<div class="a" style="left:0px;top:691px;width:963px;height:1px;background:#2a2018"></div>
</body></html>
